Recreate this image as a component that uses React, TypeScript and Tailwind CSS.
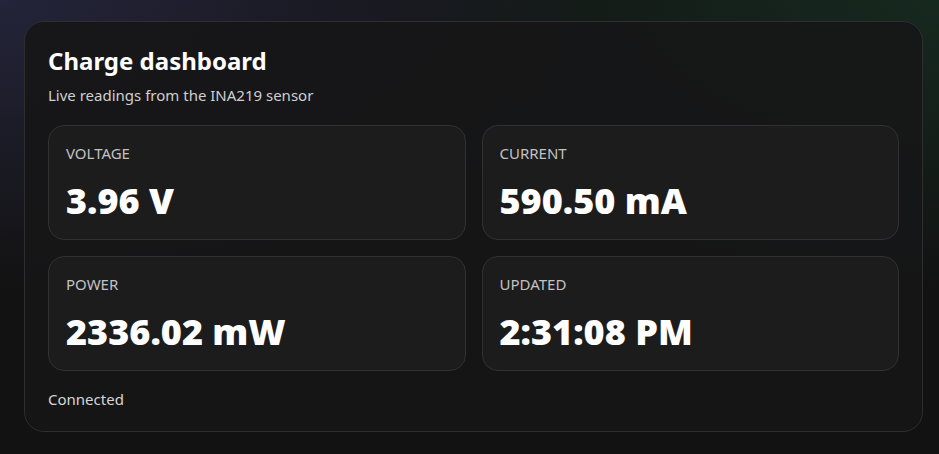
export default function App() {
  const tiles = [
    { label: "VOLTAGE", value: "3.96 V" },
    { label: "CURRENT", value: "590.50 mA" },
    { label: "POWER", value: "2336.02 mW" },
    { label: "UPDATED", value: "2:31:08 PM" },
  ];

  return (
    <div
      className="min-h-screen w-full bg-[#121212] bg-[radial-gradient(ellipse_at_top_left,#24243a_0%,transparent_45%),radial-gradient(ellipse_at_top_right,#16291f_0%,transparent_45%)] pl-6 pt-[21px] pb-[21px]"
      style={{ fontFamily: "'Segoe UI', 'Noto Sans', 'Open Sans', sans-serif" }}
    >
      <div className="w-[899px] rounded-[20px] border border-[#2e2e31] bg-[#161617]/90 px-[23px] pt-[23px] pb-[22px]">
        <h1 className="text-2xl leading-8 font-bold text-white">Charge dashboard</h1>
        <p className="mt-2 text-[15px] leading-5 text-[#cfcfcf]">Live readings from the INA219 sensor</p>

        <div className="mt-5 grid grid-cols-2 gap-4">
          {tiles.map((t) => (
            <div
              key={t.label}
              className="rounded-2xl border border-[#313133] bg-[#1c1c1d] px-[17px] pt-[17px] pb-[18px]"
            >
              <div className="text-[15px] leading-5 text-[#c2c2c2]">{t.label}</div>
              <div className="mt-[18px] text-[36px] leading-10 font-black text-white">{t.value}</div>
            </div>
          ))}
        </div>

        <div className="mt-[18px] text-[15px] leading-5 text-[#d6d6d6]">Connected</div>
      </div>
    </div>
  );
}
